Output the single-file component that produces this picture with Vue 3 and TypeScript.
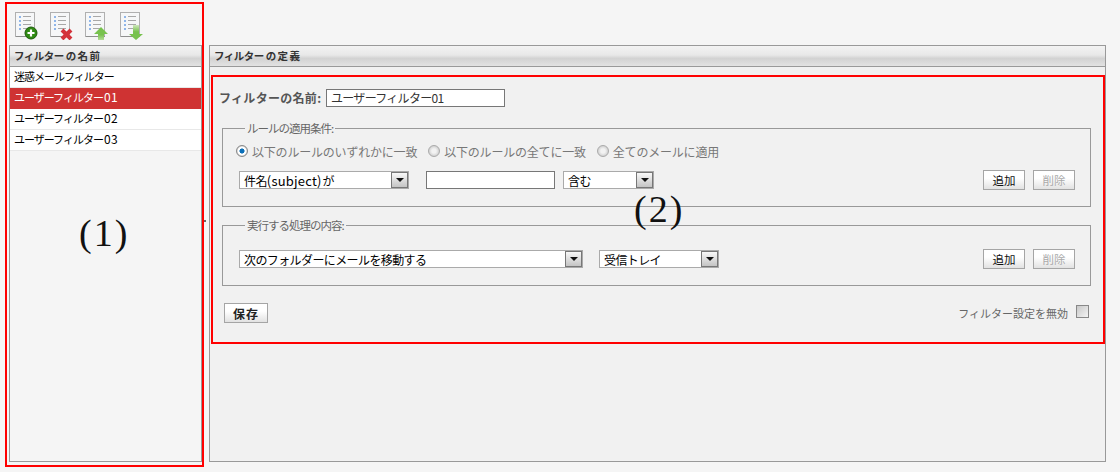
<script setup lang="ts">
const filters: { name: string; no: string }[] = [
  { name: '迷惑メールフィルター', no: '' },
  { name: 'ユーザーフィルター', no: '01' },
  { name: 'ユーザーフィルター', no: '02' },
  { name: 'ユーザーフィルター', no: '03' },
]
const radios: string[] = ['以下のルールのいずれかに一致', '以下のルールの全てに一致', '全てのメールに適用']
const lineYs: number[] = [4, 8, 12, 16]
</script>

<template>
  <div class="page">
    <aside class="left">
      <div class="toolbar">
        <svg v-for="kind in ['add', 'del', 'up', 'down']" :key="kind" class="tool" viewBox="0 0 24 28" width="24" height="28">
          <defs>
            <linearGradient id="fadeUp" x1="0" y1="0" x2="0" y2="1">
              <stop offset="0.6" stop-color="#78c24e" />
              <stop offset="1" stop-color="#b4dc98" />
            </linearGradient>
            <linearGradient id="fadeDown" x1="0" y1="0" x2="0" y2="1">
              <stop offset="0" stop-color="#cfe8bc" />
              <stop offset="0.45" stop-color="#78c24e" />
            </linearGradient>
          </defs>
          <rect x="0.5" y="0.5" width="19" height="24" fill="#f6f7f8" stroke="#b0b0b0" />
          <path d="M1 24.500h19" stroke="#8f8f8f" />
          <g v-for="y in lineYs" :key="y">
            <rect x="4" :y="y" width="2" height="2" fill="#8fb6ea" />
            <rect x="8" :y="y" width="8" height="1" fill="#a8a8a8" />
          </g>
          <g v-if="kind === 'add'">
            <circle cx="16" cy="21" r="6" fill="#2f8a12" stroke="#1c5a0a" />
            <path d="M16 17.500v7M12.500 21h7" stroke="#fff" stroke-width="2.200" />
          </g>
          <path v-else-if="kind === 'del'" d="M12 18l9 9M21 18l-9 9" stroke="#d4323a" stroke-width="4" />
          <path v-else-if="kind === 'up'" d="M16 15l7 7h-4v6h-6v-6h-4z" fill="url(#fadeUp)" />
          <path v-else d="M13 13h6v9h4l-7 6-7-6h4z" fill="url(#fadeDown)" />
        </svg>
      </div>
      <section class="panel list-panel">
        <h2 class="head">フィルター の 名 前</h2>
        <ul class="list">
          <li v-for="(f, i) in filters" :key="i" class="row" :class="{ selected: i === 1 }">{{ f.name }}<span class="digits">{{ f.no }}</span></li>
        </ul>
      </section>
    </aside>

    <main class="right">
      <section class="panel def-panel">
        <h2 class="head">フィルター の 定 義</h2>
        <div class="name-row">
          <label class="name-label">フィルターの名前:</label>
          <input class="name-input" value="ユーザーフィルター01" />
        </div>

        <fieldset class="group rules">
          <legend>ルールの適用条件:</legend>
          <div class="radios">
            <span v-for="(r, i) in radios" :key="r" class="radio-item">
              <i class="radio" :class="{ on: i === 0 }"></i>{{ r }}
            </span>
          </div>
          <div class="controls">
            <div class="select s-subject">件名<span class="latin">(subject)</span>が<b class="arrow"></b></div>
            <input class="text-input" />
            <div class="select s-op">含む<b class="arrow"></b></div>
            <div class="btns">
              <button class="btn">追加</button>
              <button class="btn off">削除</button>
            </div>
          </div>
        </fieldset>

        <fieldset class="group actions">
          <legend>実行する処理の内容:</legend>
          <div class="controls">
            <div class="select s-action">次のフォルダーにメールを移動する<b class="arrow"></b></div>
            <div class="select s-folder">受信トレイ<b class="arrow"></b></div>
            <div class="btns">
              <button class="btn">追加</button>
              <button class="btn off">削除</button>
            </div>
          </div>
        </fieldset>

        <div class="foot">
          <button class="btn save">保存</button>
          <span class="disable">フィルター設定を無効<i class="check"></i></span>
        </div>
      </section>
    </main>

    <div class="mark mark1"></div>
    <div class="mark mark2"></div>
    <span class="num num1">(1)</span>
    <span class="num num2">(2)</span>
    <i class="notch"></i>
  </div>
</template>

<style>
html, body { margin: 0; background: #f5f5f5; }
</style>

<style scoped>
* { box-sizing: border-box; }
.page {
  position: relative;
  width: 1120px;
  height: 472px;
  overflow: hidden;
  display: flex;
  gap: 7px;
  padding-left: 9px;
  background: #f5f5f5;
  color: #000;
  font-family: "Noto Sans CJK JP", "Liberation Sans", sans-serif;
  font-size: 11px;
  letter-spacing: -1px;
}
.left { width: 193px; display: flex; flex-direction: column; }
.toolbar { height: 45px; padding: 12px 0 0 6px; display: flex; gap: 11px; }
.tool { display: block; }
.panel { border: 1px solid #999; height: 417px; }
.list-panel { background: #f5f5f5; }
.head {
  margin: 0;
  height: 21px;
  padding-left: 4px;
  font-size: 10.5px;
  line-height: 19px;
  font-weight: 700;
  color: #333;
  letter-spacing: -0.5px;
  background: linear-gradient(#f3f3f3, #e8e8e8 45%, #d2d2d2 62%, #e2e2e2);
  border-bottom: 1px solid #999;
}
.list { list-style: none; margin: 0; padding: 0; }
.row {
  height: 21px;
  padding-left: 4px;
  line-height: 18px;
  background: #fff;
  border-bottom: 1px solid #e8e8e8;
}
.row.selected { background: #cf3333; color: #fff; border-bottom-color: #cf3333; }
.digits { font-size: 12px; letter-spacing: 0.4px; margin-left: 1px; }

.right { width: 897px; padding-top: 45px; }
.def-panel { background: #f1f1f1; }
.name-row { display: flex; align-items: center; margin: 22px 0 0 9px; height: 17px; }
.name-label { width: 107px; font-size: 12px; font-weight: 700; color: #555; letter-spacing: 0.3px; }
.name-input {
  width: 179px;
  height: 18px;
  padding: 0 4px;
  border: 1px solid #777;
  background: #fff;
  font: inherit;
  font-size: 12px;
  letter-spacing: -0.7px;
  color: #333;
  outline: none;
}
.group {
  display: block;
  margin: 0 0 0 12px;
  padding: 0 15px 0 16px;
  width: 869px;
  min-width: 0;
  border: 1px solid #999;
}
.group legend {
  margin-left: 6px;
  padding: 0 2px;
  height: 14px;
  line-height: 14px;
  color: #666;
  font-size: 11.5px;
}
.rules { margin-top: 15px; height: 86px; }
.actions { margin-top: 11px; height: 68px; }
.radios { display: flex; gap: 11px; height: 16px; margin: 8px 0 0 -3px; align-items: center; color: #777; font-size: 12px; letter-spacing: -0.2px; }
.radio-item { display: inline-flex; align-items: center; }
.radio {
  width: 12px;
  height: 12px;
  margin-right: 4px;
  border-radius: 50%;
  border: 1px solid #aaa;
  background: radial-gradient(circle at 50% 50%, #f2f2f2 0 30%, #cfcfcf 75%);
}
.radio.on { background: radial-gradient(circle at 50% 50%, #0b6fb8 0 34%, #fff 38% 55%, #c4c4c4 75%); border-color: #888; }
.controls { display: flex; align-items: center; height: 20px; }
.rules .controls { margin-top: 11px; }
.actions .controls { margin-top: 17px; }
.select {
  position: relative;
  height: 18px;
  padding-left: 4px;
  line-height: 17px;
  background: #fff;
  border: 1px solid #aaa;
  font-size: 12px;
  letter-spacing: -0.6px;
}
.latin { font-size: 13px; letter-spacing: 0.2px; margin: 0 1px 0 0; }
.arrow {
  position: absolute;
  right: 0;
  top: 0;
  width: 17px;
  height: 16px;
  border: 1px solid #777;
  background: linear-gradient(#f8f8f8, #c4c4c4);
}
.arrow::after {
  content: "";
  position: absolute;
  left: 4px;
  top: 5px;
  border: 4px solid transparent;
  border-top: 4px solid #111;
  border-bottom: 0;
}
.s-subject { width: 170px; }
.text-input {
  width: 129px;
  height: 18px;
  margin-left: 17px;
  border: 1px solid #777;
  background: #fff;
  outline: none;
}
.s-op { width: 91px; margin-left: 8px; }
.s-action { width: 344px; }
.s-folder { width: 120px; margin-left: 16px; }
.btns { margin-left: auto; display: flex; gap: 8px; }
.btn {
  width: 42px;
  height: 20px;
  padding: 0;
  border: 1px solid #a5a5a5;
  background: linear-gradient(#fff, #fff 40%, #e2e2e2);
  font: inherit;
  font-size: 11.5px;
  letter-spacing: 0;
  color: #111;
  line-height: 17px;
}
.btn.off { color: #aaa; }
.foot { display: flex; align-items: center; justify-content: space-between; margin: 17px 16px 0 14px; height: 20px; }
.btn.save { width: 44px; font-weight: 700; color: #222; font-size: 12px; letter-spacing: 1px; }
.disable { display: inline-flex; align-items: flex-start; color: #666; font-size: 11px; letter-spacing: 0; line-height: 20px; }
.check {
  width: 13px;
  height: 13px;
  margin: 2px 0 0 8px;
  border: 1px solid #888;
  background: linear-gradient(135deg, #c8c8c8, #f4f4f4);
}
.mark { position: absolute; border: 2px solid #f00; pointer-events: none; }
.mark1 { left: 5px; top: 2px; width: 199px; height: 465px; }
.mark2 { left: 211px; top: 75px; width: 894px; height: 269px; }
.num {
  position: absolute;
  font-family: "Liberation Serif", serif;
  font-size: 38px;
  line-height: 44px;
  letter-spacing: 2px;
  color: #111;
}
.num1 { left: 79px; top: 211px; }
.num2 { left: 634px; top: 187px; }
.notch { position: absolute; left: 204px; top: 220px; width: 2px; height: 2px; background: #666; }
</style>
